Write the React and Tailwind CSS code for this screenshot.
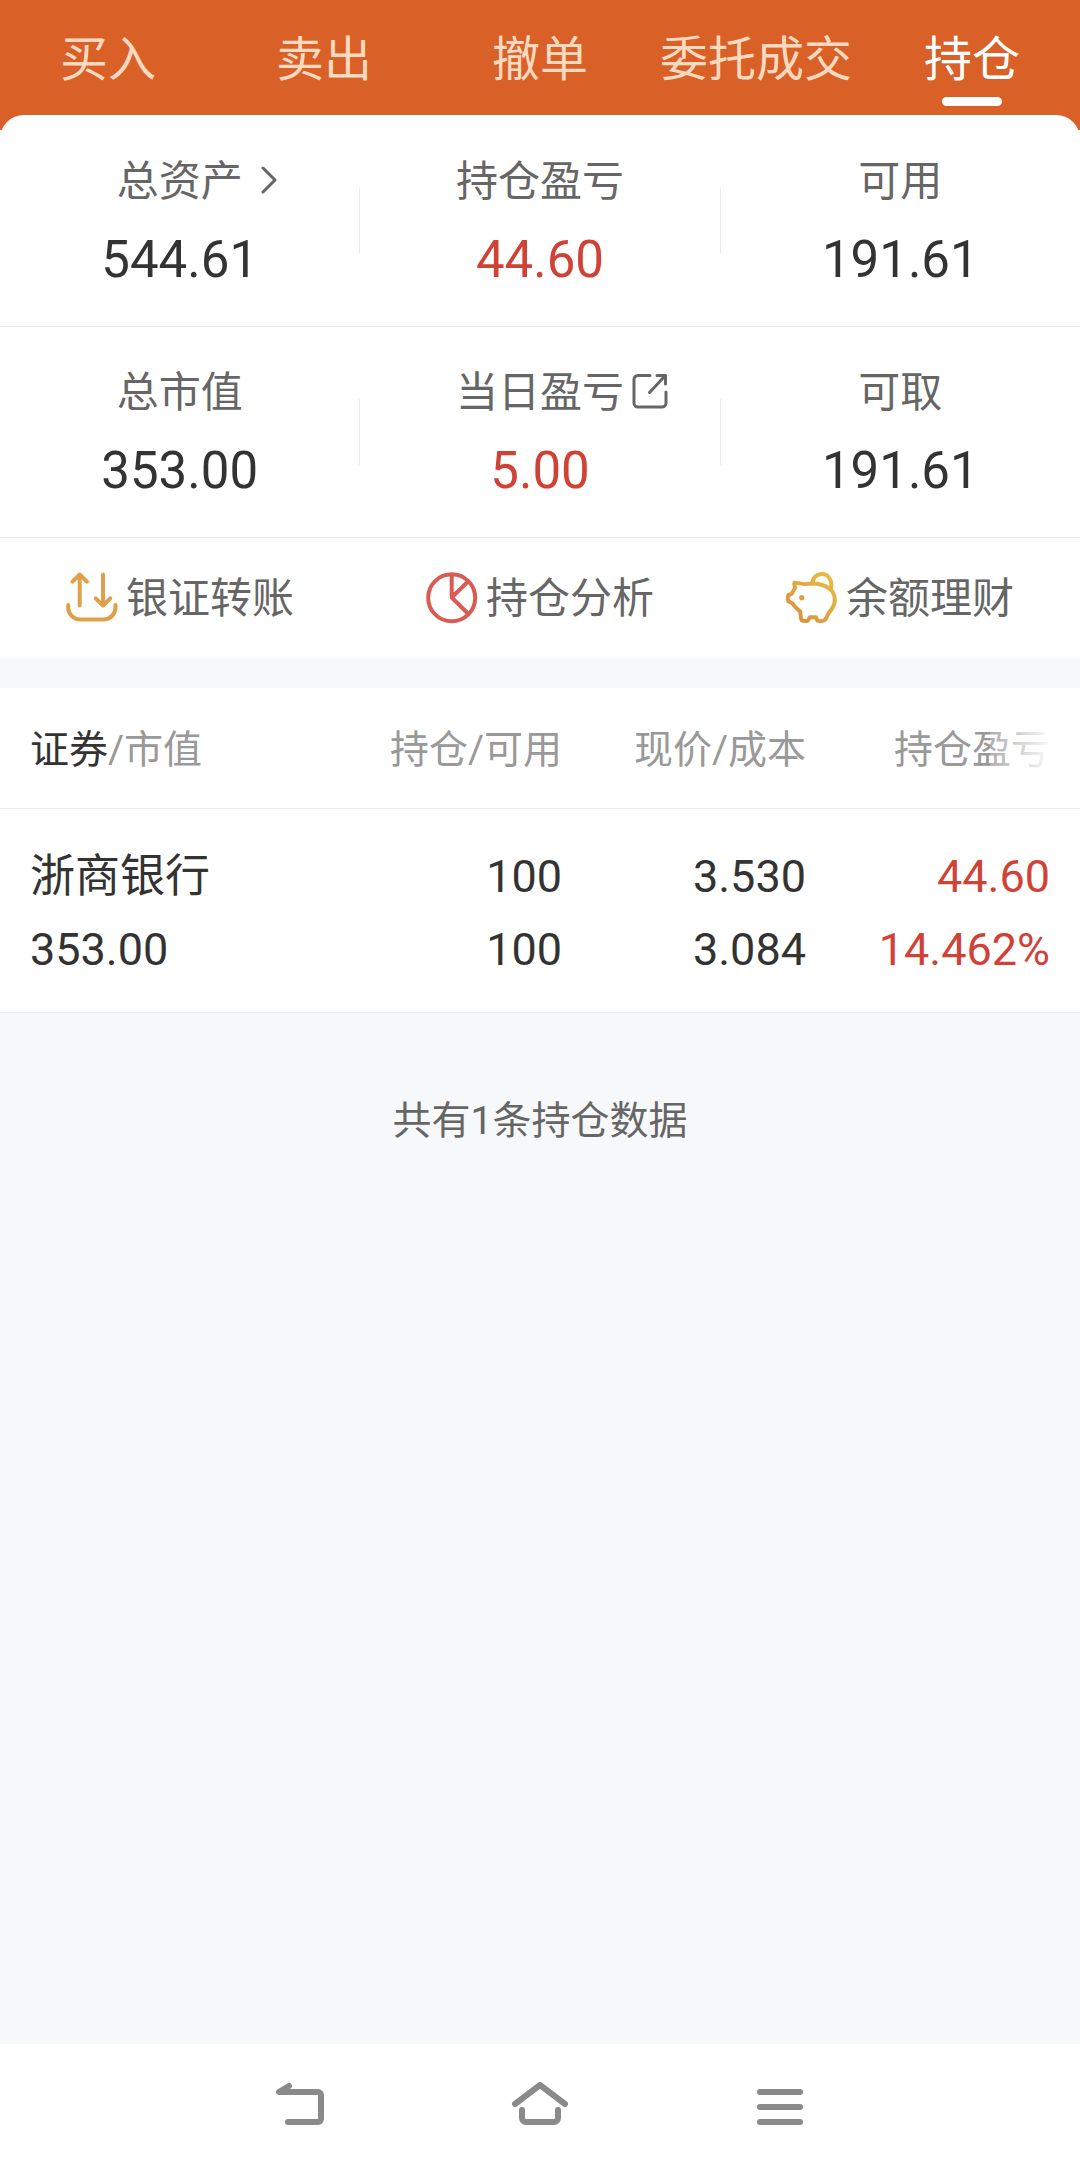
import { useState } from 'react';

const tabs = ['买入', '卖出', '撤单', '委托成交', '持仓'];

const holdings = [
  { name: '浙商银行', value: '353.00', amount: '100', available: '100', price: '3.530', cost: '3.084', profit: '44.60', rate: '14.462%' },
];

function ChevronIcon() {
  return (
    <svg width="16" height="28" viewBox="0 0 16 28" fill="none" stroke="#666" strokeWidth="3" strokeLinecap="round" strokeLinejoin="round" aria-hidden="true">
      <path d="M2 2l12 12L2 26" />
    </svg>
  );
}

function ShareIcon() {
  return (
    <svg width="36" height="36" viewBox="0 0 36 36" fill="none" stroke="#666" strokeWidth="3" strokeLinecap="round" strokeLinejoin="round" aria-hidden="true">
      <path d="M18 2.500H6a4 4 0 0 0-4 4V30a4 4 0 0 0 4 4h24a4 4 0 0 0 4-4V19" />
      <path d="M25 2.500h8.500V11M33 3L17.500 19.500" />
    </svg>
  );
}

function TransferIcon() {
  return (
    <svg width="52" height="52" viewBox="0 0 52 52" fill="none" stroke="#e0a04a" strokeWidth="4" strokeLinecap="round" strokeLinejoin="round" aria-hidden="true">
      <path d="M13.700 33.500V2.500M6.500 9.700l7.200-7.200 7.200 7.200" />
      <path d="M37 2.500v31M29.700 26.300l7.300 7.200 7.300-7.200" />
      <path d="M2.200 33v2.500a12 12 0 0 0 12 12h23.300a12 12 0 0 0 12-12v-2.500" />
    </svg>
  );
}

function PieIcon() {
  return (
    <svg width="52" height="52" viewBox="0 0 52 52" fill="none" stroke="#d95c54" strokeWidth="4" strokeLinejoin="round" aria-hidden="true">
      <circle cx="25.700" cy="25.700" r="23.500" />
      <path d="M25.700 2v23.500L42.500 9M25.700 25.500L42.500 42" />
    </svg>
  );
}

function PiggyIcon() {
  return (
    <svg width="52" height="52" viewBox="0 0 52 52" fill="none" stroke="url(#piggy)" strokeWidth="4" strokeLinecap="round" strokeLinejoin="round" aria-hidden="true">
      <defs>
        <linearGradient id="piggy" x1="46" y1="2" x2="8" y2="48" gradientUnits="userSpaceOnUse">
          <stop offset="0" stopColor="#e8bc45" />
          <stop offset="1" stopColor="#da9340" />
        </linearGradient>
      </defs>
      <path d="M20 12c-4 .8-8-1.800-11.500-1.300-.8 1.800.3 3.800.8 5.300-1.800 1.500-2.300 3.800-3.500 5.800l-3.500 1.200c-.6 2-.6 4.200 0 6.200l4.500 2.300c1.500 3.500 4.500 5.500 7.500 8 .4 3 0 6 1.200 8.500 2 1.300 4.500 1.300 6.500.6l1.700-3.300h6.300l1.300 3.300c2.200.7 5 .7 7.200-.3 2.500-2.300 3-5.800 5-8.300 2.800-3.500 5-6.500 5.300-11 .2-5-1.300-9.500-5.300-12.300C37 12 28 11 20 12z" />
      <path d="M26.500 11.500c0-6 4.500-9.500 9.500-9.500 6 0 11 6.500 8.800 14.500" />
      <circle cx="15.700" cy="25.700" r="2.600" fill="#e0a040" stroke="none" />
    </svg>
  );
}

function BackIcon() {
  return (
    <svg width="48" height="44" viewBox="0 0 48 44" fill="none" stroke="#8a8a8a" strokeWidth="6" strokeLinecap="round" strokeLinejoin="round" aria-hidden="true">
      <path d="M13 4L3 10h39a3 3 0 0 1 3 3v24a3 3 0 0 1-3 3H12" />
    </svg>
  );
}

function HomeIcon() {
  return (
    <svg width="58" height="44" viewBox="0 0 58 44" fill="none" stroke="#8a8a8a" strokeWidth="6" strokeLinecap="round" strokeLinejoin="round" aria-hidden="true">
      <path d="M4 22L29 3l25 19" />
      <path d="M11 28v8a4 4 0 0 0 4 4h28a4 4 0 0 0 4-4v-8" />
    </svg>
  );
}

function MenuIcon() {
  return (
    <svg width="46" height="44" viewBox="0 0 46 44" fill="none" stroke="#8a8a8a" strokeWidth="6" strokeLinecap="round" aria-hidden="true">
      <path d="M3 10h40M3 25h40M3 40h40" />
    </svg>
  );
}

function Stat({ label, value, red, icon }) {
  return (
    <div className="flex flex-1 items-center">
      <dl className="flex-1 text-center">
        <dt className="grid grid-cols-[1fr_auto_1fr] items-center text-[42px] leading-[60px] text-[#666]">
          <span className="col-start-2">{label}</span>
          {icon}
        </dt>
        <dd className={`mt-[18px] text-[51px] leading-[60px] ${red ? 'text-[#d04236]' : 'text-[#333]'}`}>{value}</dd>
      </dl>
    </div>
  );
}

function StatRow({ children }) {
  return <div className="flex border-b border-[#ececec] py-9">{children}</div>;
}

function Separator() {
  return <div className="h-[66px] w-px self-center bg-[#ececec]" />;
}

function Shortcut({ icon, label }) {
  return (
    <button type="button" className="flex h-[120px] flex-1 items-center justify-center gap-2 text-[42px] text-[#666]">
      {icon}
      {label}
    </button>
  );
}

export default function App() {
  const [active, setActive] = useState('持仓');

  return (
    <div className="flex min-h-screen flex-col bg-[#f7f8fa] font-['Roboto','Noto_Sans_CJK_SC',sans-serif]">
      <div className="bg-linear-to-b from-[#d96128] from-[130px] to-white to-[130px]">
        <nav className="flex">
          {tabs.map((tab) => (
            <button
              key={tab}
              type="button"
              onClick={() => setActive(tab)}
              className={`flex h-[115px] flex-1 basis-0 flex-col items-center pt-6 text-[48px] leading-[72px] whitespace-nowrap ${active === tab ? 'text-white' : 'text-[#fdd9c0]'}`}
            >
              {tab}
              {active === tab && <span className="mt-px h-[9px] w-[60px] rounded-full bg-white" />}
            </button>
          ))}
        </nav>

        <section className="rounded-t-3xl bg-white pt-px">
          <StatRow>
            <Stat label="总资产" value="544.61" icon={<span className="ml-[18px] pb-1"><ChevronIcon /></span>} />
            <Separator />
            <Stat label="持仓盈亏" value="44.60" red />
            <Separator />
            <Stat label="可用" value="191.61" />
          </StatRow>
          <StatRow>
            <Stat label="总市值" value="353.00" />
            <Separator />
            <Stat label="当日盈亏" value="5.00" red icon={<span className="ml-2 pb-1"><ShareIcon /></span>} />
            <Separator />
            <Stat label="可取" value="191.61" />
          </StatRow>
          <div className="flex">
            <Shortcut icon={<TransferIcon />} label="银证转账" />
            <Shortcut icon={<PieIcon />} label="持仓分析" />
            <Shortcut icon={<PiggyIcon />} label="余额理财" />
          </div>
        </section>
      </div>

      <table className="mt-[30px] w-full table-fixed bg-white text-right text-[#333]">
        <thead>
          <tr className="h-[120px] border-b border-[#ececec] text-[39px] text-[#999]">
            <th className="pt-1 pl-[30px] text-left font-normal"><span className="text-[#333]">证券</span>/市值</th>
            <th className="w-[244px] pt-1 font-normal">持仓/可用</th>
            <th className="w-[244px] pt-1 font-normal">现价/成本</th>
            <th className="w-[274px] pt-1 pr-[30px] font-normal">
              <span className="relative inline-block">
                持仓盈亏
                <span className="absolute inset-y-0 right-0 w-[60px] bg-linear-to-r from-white/20 to-white/95" />
              </span>
            </th>
          </tr>
        </thead>
        <tbody>
          {holdings.map((item) => (
            <tr key={item.name} className="h-[204px] border-b border-[#ececec] text-[45px] leading-[73px]">
              <td className="pt-1.5 pl-[30px] text-left"><p>{item.name}</p><p>{item.value}</p></td>
              <td className="pt-1.5"><p>{item.amount}</p><p>{item.available}</p></td>
              <td className="pt-1.5"><p>{item.price}</p><p>{item.cost}</p></td>
              <td className="pt-1.5 pr-[30px] text-[#d04236]"><p>{item.profit}</p><p>{item.rate}</p></td>
            </tr>
          ))}
        </tbody>
      </table>

      <p className="mt-20 flex-1 text-center text-[39px] leading-[56px] text-[#666]">共有{holdings.length}条持仓数据</p>

      <footer className="bg-white">
        <div className="mx-auto grid h-[124px] w-2/3 grid-cols-3 pb-1">
          <button type="button" aria-label="返回" className="flex items-center justify-center"><BackIcon /></button>
          <button type="button" aria-label="主页" className="flex items-center justify-center"><HomeIcon /></button>
          <button type="button" aria-label="菜单" className="flex items-center justify-center"><MenuIcon /></button>
        </div>
      </footer>
    </div>
  );
}
